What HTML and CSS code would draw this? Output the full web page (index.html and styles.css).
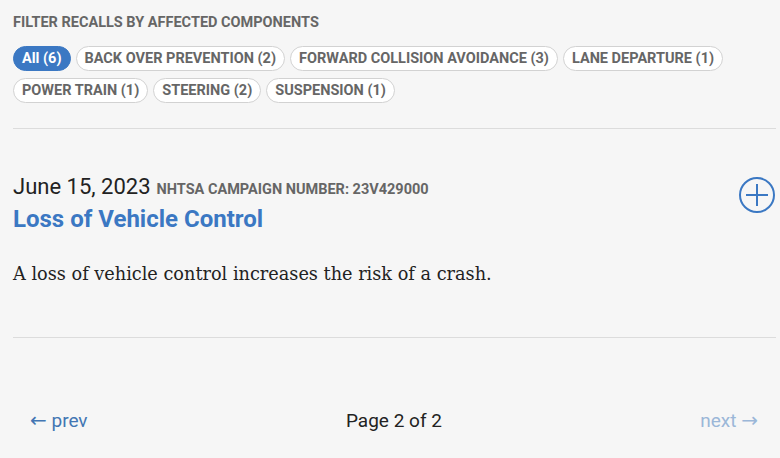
FILE: index.html
```html
<!DOCTYPE html>
<html lang="en">

<head>
    <meta charset="UTF-8">
    <meta name="viewport" content="width=device-width, initial-scale=1.0">
    <title>Recalls</title>
    <link rel="stylesheet" href="styles.css">
</head>

<body>
    <section class="filters">
        <h3 class="filters-title">Filter recalls by affected components</h3>
        <div class="chips">
            <button class="chip active">All (6)</button>
            <button class="chip">Back over prevention (2)</button>
            <button class="chip">Forward collision avoidance (3)</button>
            <button class="chip">Lane departure (1)</button>
            <button class="chip">Power train (1)</button>
            <button class="chip">Steering (2)</button>
            <button class="chip">Suspension (1)</button>
        </div>
    </section>

    <article class="recall">
        <div class="recall-head">
            <div>
                <div class="recall-meta">
                    <span class="recall-date">June 15, 2023</span>
                    <span class="campaign">NHTSA Campaign Number: 23V429000</span>
                </div>
                <h2 class="recall-title">Loss of Vehicle Control</h2>
            </div>
            <button class="expand" aria-label="Expand">
                <svg width="38" height="38" viewBox="0 0 38 38">
                    <circle cx="19" cy="19" r="17" fill="none" stroke="#3b78c3" stroke-width="2" />
                    <path d="M19 8 V30 M8 19 H30" stroke="#3b78c3" stroke-width="2" />
                </svg>
            </button>
        </div>
        <p class="recall-desc">A loss of vehicle control increases the risk of a crash.</p>
    </article>

    <nav class="pager">
        <a href="#" class="pager-link"><span class="arrow">&larr;</span> prev</a>
        <span class="pager-info">Page 2 of 2</span>
        <a href="#" class="pager-link disabled">next <span class="arrow">&rarr;</span></a>
    </nav>
</body>

</html>
```

FILE: styles.css
```css
body {
    font-family: Roboto, 'Liberation Sans', sans-serif;
    background-color: #f6f6f6;
    margin: 0;
    padding: 0 4px 0 13px;
    color: #222;
}

.filters {
    padding-top: 14px;
    padding-bottom: 25px;
    border-bottom: 1px solid #dcdcdc;
}

.filters-title {
    font-size: 14.5px;
    line-height: 17px;
    font-weight: 700;
    text-transform: uppercase;
    color: #666;
    margin: 0 0 15px;
}

.chips {
    display: flex;
    flex-wrap: wrap;
    gap: 7px 5px;
}

.chip {
    font-family: Roboto, 'Liberation Sans', sans-serif;
    font-size: 14.5px;
    font-weight: 700;
    text-transform: uppercase;
    color: #666;
    background: #fff;
    border: 1px solid #d2d2d2;
    border-radius: 13px;
    height: 25px;
    padding: 0 8px;
}

.chip.active {
    background: #3b78c3;
    border-color: #3b78c3;
    color: #fff;
    text-transform: none;
}

.recall {
    border-bottom: 1px solid #dcdcdc;
    padding: 45px 0 52px;
}

.recall-head {
    display: flex;
    justify-content: space-between;
    align-items: flex-start;
}

.recall-meta {
    display: flex;
    align-items: baseline;
    gap: 6px;
    line-height: 26px;
}

.recall-date {
    font-size: 22px;
    color: #222;
}

.campaign {
    font-size: 14.5px;
    font-weight: 700;
    text-transform: uppercase;
    color: #666;
}

.recall-title {
    font-size: 24px;
    line-height: 28px;
    font-weight: 700;
    color: #3b78c3;
    margin: 2px 0 0;
}

.expand {
    background: none;
    border: none;
    padding: 0;
    margin-top: 2px;
    width: 38px;
    height: 38px;
}

.recall-desc {
    font-family: 'DejaVu Serif', serif;
    font-size: 17.7px;
    line-height: 21px;
    margin: 31px 0 0;
}

.pager {
    display: flex;
    justify-content: space-between;
    align-items: center;
    padding: 71px 18px 0 17px;
    font-size: 19px;
    line-height: 22px;
}

.pager-link {
    color: #4376b3;
    text-decoration: none;
}

.pager-link .arrow {
    font-family: 'DejaVu Sans', sans-serif;
    font-size: 20px;
}

.pager-link.disabled {
    color: #9bb7d8;
}

.pager-info {
    color: #222;
}
```
